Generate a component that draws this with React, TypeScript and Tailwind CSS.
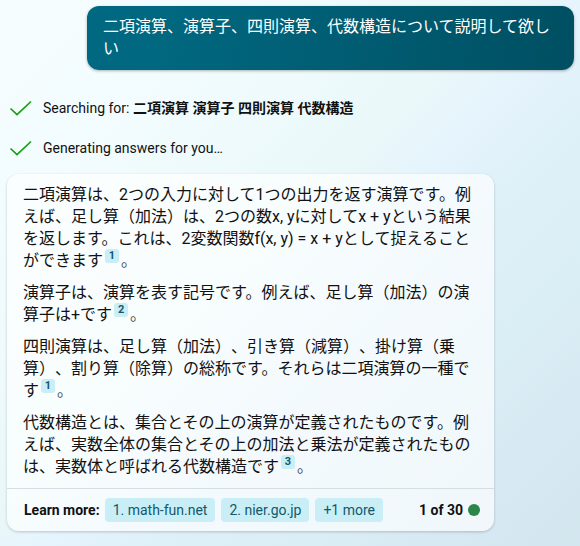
import type { ReactNode } from "react";

function Check() {
  return (
    <svg className="h-4 w-6 shrink-0" viewBox="0 0 24 16" fill="none" aria-hidden="true">
      <path d="M1.500 8.500l6.500 6L22 1.500" stroke="#13a10e" strokeWidth="1.700" />
    </svg>
  );
}

function Status({ children }: { children: ReactNode }) {
  return (
    <li className="flex items-center gap-[10px] text-sm leading-5">
      <Check />
      <span>{children}</span>
    </li>
  );
}

function Cite({ n }: { n: number }) {
  return (
    <>
      <sup className="top-0 mx-[2px] -my-1 inline-flex align-[7px] leading-none">
        <a
          href={`#source-${n}`}
          className="flex h-[14px] w-[14px] items-center justify-center rounded-[3px] bg-[#c9eef6] text-[11px] font-bold text-[#12596b]"
        >
          {n}
        </a>
      </sup>
      <span className="text-[#444]">。</span>
    </>
  );
}

function Source({ href, children }: { href: string; children: ReactNode }) {
  return (
    <a href={href} className="h-6 rounded-sm bg-[#c9eef6] px-2 leading-6 text-[#12596b]">
      {children}
    </a>
  );
}

export default function App() {
  return (
    <main
      lang="ja"
      className="min-h-screen bg-[linear-gradient(135deg,#f6fdff_0%,#f2fcfe_22%,#eaf8f9_45%,#e6f4fd_52%,#def0f8_62%,#daeef5_76%,#d6e8f2_90%,#d3e7ef_100%)] p-[6px] pb-4 font-['Roboto','Noto_Sans_CJK_JP',sans-serif] text-[#111] [text-spacing-trim:space-all]"
    >
      <div className="ml-[81px] rounded-xl bg-[linear-gradient(100deg,#006880_0%,#006880_15%,#004f62_100%)] px-4 py-[10px] text-base leading-[22px] text-white shadow-[0_1px_3px_rgba(0,0,0,0.3)]">
        二項演算、演算子、四則演算、代数構造について説明して欲しい
      </div>

      <ul className="mt-7 flex flex-col gap-5 pl-[3px]">
        <Status>
          Searching for: <b>二項演算 演算子 四則演算 代数構造</b>
        </Status>
        <Status>Generating answers for you…</Status>
      </ul>

      <article className="mt-4 mr-[80px] ml-px rounded-xl bg-white/65 shadow-[0_1px_3px_rgba(0,0,0,0.2)]">
        <div className="flex flex-col gap-[10px] px-4 py-[10px] text-base leading-[22px]">
          <p>
            二項演算は、2つの入力に対して1つの出力を返す演算です。例えば、足し算（加法）は、2つの数x, yに対してx + yという結果を返します。これは、2変数関数f(x, y) = x + yとして捉えることができます
            <Cite n={1} />
          </p>
          <p>
            演算子は、演算を表す記号です。例えば、足し算（加法）の演算子は+です
            <Cite n={2} />
          </p>
          <p>
            四則演算は、足し算（加法）、引き算（減算）、掛け算（乗算）、割り算（除算）の総称です。それらは二項演算の一種です
            <Cite n={1} />
          </p>
          <p>
            代数構造とは、集合とその上の演算が定義されたものです。例えば、実数全体の集合とその上の加法と乗法が定義されたものは、実数体と呼ばれる代数構造です
            <Cite n={3} />
          </p>
        </div>
        <footer className="flex items-center gap-[5px] border-t border-[#d5dfe3] py-[9px] pr-[14px] pl-[17px] text-sm">
          <span className="font-bold">Learn more:</span>
          <nav className="flex gap-[6px]">
            <Source href="#source-1">1. math-fun.net</Source>
            <Source href="#source-2">2. nier.go.jp</Source>
            <button type="button" className="h-6 rounded-sm bg-[#c9eef6] px-2 leading-6 text-[#12596b]">
              +1 more
            </button>
          </nav>
          <span className="ml-auto font-bold">1 of 30</span>
          <span className="h-3 w-3 rounded-full bg-[#2c8549]" />
        </footer>
      </article>
    </main>
  );
}
